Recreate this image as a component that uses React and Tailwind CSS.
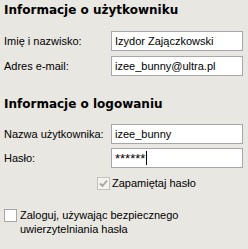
const font = { fontFamily: '"Liberation Sans", Arial, sans-serif' };

function Field({ label, value, caret }) {
  return (
    <div className="flex items-center">
      <span className="w-[107px] text-[11px] text-black">{label}</span>
      <div className="flex h-[20px] w-[132px] items-center border border-[#a7a6aa] bg-white px-[3px] text-[11px] text-black">
        <span className={caret ? "text-[13px] leading-[13px]" : ""}>{value}</span>
        {caret && <span className="ml-[1px] inline-block h-[14px] w-px bg-black" />}
      </div>
    </div>
  );
}

export default function App() {
  return (
    <div
      className="flex h-[249px] w-[248px] flex-col bg-[#e9e7e1] pl-[4px] pt-[3px]"
      style={font}
    >
      <h2 className="font-['DejaVu_Sans'] text-[12px] font-bold leading-[15px] text-black">
        Informacje o użytkowniku
      </h2>
      <div className="mt-[13px] flex flex-col gap-[5px]">
        <Field label="Imię i nazwisko:" value="Izydor Zajączkowski" />
        <Field label="Adres e-mail:" value="izee_bunny@ultra.pl" />
      </div>

      <h2 className="mt-[21px] font-['DejaVu_Sans'] text-[12px] font-bold leading-[15px] text-black">
        Informacje o logowaniu
      </h2>
      <div className="mt-[12px] flex flex-col gap-[4px]">
        <Field label="Nazwa użytkownika:" value="izee_bunny" />
        <Field label="Hasło:" value="******" caret />
      </div>

      <label className="ml-[93px] mt-[7px] flex items-center gap-[2px] text-[11px] text-black">
        <span className="flex h-[13px] w-[13px] items-center justify-center border border-[#c4c3bd] bg-[#f4f3ee]">
          <svg width="9" height="9" viewBox="0 0 9 9">
            <path d="M1 4.5 L3.5 7 L8 1.5" fill="none" stroke="#a3a39c" strokeWidth="1.8" />
          </svg>
        </span>
        Zapamiętaj hasło
      </label>

      <label className="mt-[16px] flex items-start gap-[3px] text-[11px] leading-[14px] text-black">
        <span className="mt-[1px] h-[13px] w-[13px] shrink-0 border border-[#a7a6aa] bg-white" />
        <span>
          Zaloguj, używając bezpiecznego
          <br />
          uwierzytelniania hasła
        </span>
      </label>
    </div>
  );
}
